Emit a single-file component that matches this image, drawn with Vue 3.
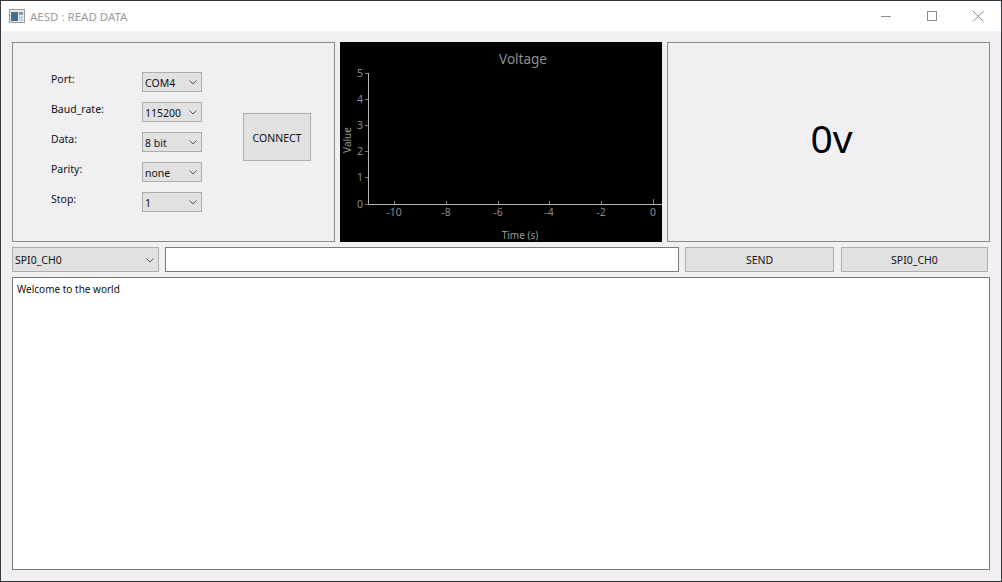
<script setup>
const fields = [
  { label: 'Port:', value: 'COM4' },
  { label: 'Baud_rate:', value: '115200' },
  { label: 'Data:', value: '8 bit' },
  { label: 'Parity:', value: 'none' },
  { label: 'Stop:', value: '1' },
]

const yTicks = [
  { y: 205, label: '0' },
  { y: 178, label: '1' },
  { y: 152, label: '2' },
  { y: 126, label: '3' },
  { y: 100, label: '4' },
  { y: 74, label: '5' },
]

const xTicks = [
  { x: 394, label: '-10' },
  { x: 446, label: '-8' },
  { x: 498, label: '-6' },
  { x: 549, label: '-4' },
  { x: 601, label: '-2' },
  { x: 653, label: '0' },
]
</script>

<template>
  <div class="window">
    <header class="titlebar">
      <svg class="app-icon" width="16" height="14" viewBox="0 0 16 14">
        <rect x="0.5" y="0.5" width="15" height="13" fill="#e8e8e8" stroke="#9a9a9a" />
        <rect x="2" y="3" width="7" height="9" fill="#3f6f8c" />
        <rect x="10" y="3" width="4" height="3" fill="#8a9aa6" />
        <rect x="10" y="7" width="4" height="5" fill="#c9d0d6" />
      </svg>
      <span class="title">AESD : READ DATA</span>
      <div class="controls">
        <svg width="46" height="30" viewBox="0 0 46 30"><path d="M18 15.5h10" stroke="#8c8c8c" fill="none" /></svg>
        <svg width="46" height="30" viewBox="0 0 46 30"><rect x="18.5" y="10.5" width="9" height="9" stroke="#8c8c8c" fill="none" /></svg>
        <svg width="46" height="30" viewBox="0 0 46 30"><path d="M18 10l10.500 10.500M28.500 10L18 20.500" stroke="#8c8c8c" fill="none" /></svg>
      </div>
    </header>

    <main class="content">
      <section class="top-row">
        <div class="panel settings">
          <div class="form">
            <template v-for="field in fields" :key="field.label">
              <label class="field-label">{{ field.label }}</label>
              <div class="combo">
                <span>{{ field.value }}</span>
                <svg class="chevron" width="8" height="5" viewBox="0 0 8 5"><path d="M0.500 0.500L4 4l3.500-3.500" stroke="#555" fill="none" /></svg>
              </div>
            </template>
          </div>
          <button class="btn connect">CONNECT</button>
        </div>

        <div class="plot">
          <svg width="322" height="200" viewBox="340 42 322 200">
            <rect x="340" y="42" width="322" height="200" fill="#000" />
            <text x="523" y="64" class="plot-title" text-anchor="middle">Voltage</text>
            <path d="M368.500 73V204.500H662" stroke="#b4b4b4" fill="none" />
            <g v-for="t in yTicks" :key="t.label">
              <path :d="`M365 ${t.y - 0.5}h3`" stroke="#777" />
              <text x="360" :y="t.y + 3" class="tick" text-anchor="middle">{{ t.label }}</text>
            </g>
            <g v-for="t in xTicks" :key="t.label">
              <path :d="`M${t.x + 0.5} ${t.label === '0' ? 199 : 201}V204`" stroke="#888" />
              <text :x="t.x" y="216" class="tick" text-anchor="middle">{{ t.label }}</text>
            </g>
            <text x="520" y="239" class="axis" text-anchor="middle">Time (s)</text>
            <text x="351" y="140" class="axis" text-anchor="middle" transform="rotate(-90 351 140)">Value</text>
          </svg>
        </div>

        <div class="panel reading">0v</div>
      </section>

      <section class="command-row">
        <div class="combo wide">
          <span>SPI0_CH0</span>
          <svg class="chevron" width="8" height="5" viewBox="0 0 8 5"><path d="M0.500 0.500L4 4l3.500-3.500" stroke="#555" fill="none" /></svg>
        </div>
        <input class="line-edit" type="text" />
        <button class="btn">SEND</button>
        <button class="btn last">SPI0_CH0</button>
      </section>

      <div class="log">Welcome to the world</div>
    </main>
  </div>
</template>

<style>
html, body {
  margin: 0;
  background: #f0f0f0;
}
</style>

<style scoped>
.window {
  width: 1002px;
  height: 582px;
  box-sizing: border-box;
  border: 1px solid #33383c;
  background: #f0f0f2;
  display: flex;
  flex-direction: column;
  font-family: "Noto Sans", "Liberation Sans", sans-serif;
  font-size: 10.500px;
  color: #111;
  overflow: hidden;
}

.titlebar {
  height: 30px;
  flex: none;
  background: #fff;
  display: flex;
  align-items: center;
  padding-left: 8px;
}
.app-icon {
  margin-right: 5px;
}
.title {
  font-size: 11.500px;
  color: #9a9a9a;
}
.controls {
  margin-left: auto;
  display: flex;
}

.content {
  flex: 1;
  display: flex;
  flex-direction: column;
  gap: 5px;
  padding: 11px;
  min-height: 0;
}

.top-row {
  display: grid;
  grid-template-columns: 323px 322px 323px;
  gap: 5px;
  height: 200px;
}

.panel {
  box-sizing: border-box;
  border: 1px solid #8a8a8a;
}

.settings {
  display: flex;
  align-items: flex-start;
}
.form {
  display: grid;
  grid-template-columns: 91px 60px;
  grid-auto-rows: 20px;
  row-gap: 10px;
  margin: 29px 0 0 38px;
}
.field-label {
  line-height: 14px;
}

.combo {
  box-sizing: border-box;
  border: 1px solid #adadad;
  background: #e1e1e1;
  display: flex;
  align-items: center;
  justify-content: space-between;
  padding: 1px 4px 0 2px;
}
.combo.wide {
  height: 25px;
}
.chevron {
  flex: none;
}

.btn {
  box-sizing: border-box;
  border: 1px solid #adadad;
  background: #e1e1e1;
  font: inherit;
  color: inherit;
  padding: 0;
}
.btn.last {
  margin-left: 1px;
}
.connect {
  width: 68px;
  height: 48px;
  margin: 70px 0 0 41px;
  padding-top: 2px;
}

.plot {
  background: #000;
  height: 200px;
}
.plot svg {
  display: block;
}
.plot-title {
  font-size: 13.500px;
  fill: #8f8f8f;
}
.tick {
  font-size: 10.500px;
  fill: #8c8c8c;
}
.axis {
  font-size: 10px;
  fill: #9a9a9a;
}

.reading {
  display: flex;
  align-items: center;
  justify-content: center;
  font-size: 39px;
  padding: 0 0 9px 6px;
  color: #000;
}

.command-row {
  display: grid;
  grid-template-columns: 147px 514px 149px 148px;
  gap: 6px;
  height: 25px;
}
.line-edit {
  box-sizing: border-box;
  height: 25px;
  width: 100%;
  border: 1px solid #7a7a7a;
  background: #fff;
  margin: 0;
  padding: 0;
  outline: none;
}

.log {
  flex: 1;
  box-sizing: border-box;
  border: 1px solid #7a7a7a;
  background: #fff;
  padding: 4px 4px;
  min-height: 0;
  font-size: 10px;
}
</style>
